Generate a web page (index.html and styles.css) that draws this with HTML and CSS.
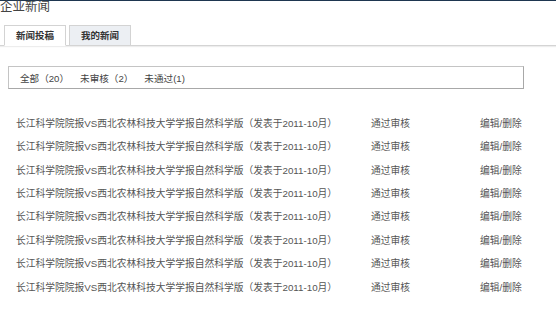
FILE: index.html
```
<!DOCTYPE html>
<html lang="zh-CN">

<head>
  <meta charset="UTF-8">
  <title>企业新闻</title>
  <link rel="stylesheet" href="styles.css">
</head>

<body>
  <div class="topbar"></div>
  <h1 class="page-title">企业新闻</h1>

  <!-- タブ -->
  <div class="tabs">
    <a href="javascript:void(0);" class="tab active">新闻投稿</a>
    <a href="javascript:void(0);" class="tab">我的新闻</a>
  </div>

  <div class="filter">
    <a href="javascript:void(0);">全部（20）</a>
    <a href="javascript:void(0);">未审核（2）</a>
    <a href="javascript:void(0);">未通过(1)</a>
  </div>

  <div class="news-list">
    <div class="news-row">
      <span class="news-title">长江科学院院报VS西北农林科技大学学报自然科学版（发表于2011-10月）</span>
      <span class="news-status">通过审核</span>
      <span class="news-ops">编辑/删除</span>
    </div>
    <div class="news-row">
      <span class="news-title">长江科学院院报VS西北农林科技大学学报自然科学版（发表于2011-10月）</span>
      <span class="news-status">通过审核</span>
      <span class="news-ops">编辑/删除</span>
    </div>
    <div class="news-row">
      <span class="news-title">长江科学院院报VS西北农林科技大学学报自然科学版（发表于2011-10月）</span>
      <span class="news-status">通过审核</span>
      <span class="news-ops">编辑/删除</span>
    </div>
    <div class="news-row">
      <span class="news-title">长江科学院院报VS西北农林科技大学学报自然科学版（发表于2011-10月）</span>
      <span class="news-status">通过审核</span>
      <span class="news-ops">编辑/删除</span>
    </div>
    <div class="news-row">
      <span class="news-title">长江科学院院报VS西北农林科技大学学报自然科学版（发表于2011-10月）</span>
      <span class="news-status">通过审核</span>
      <span class="news-ops">编辑/删除</span>
    </div>
    <div class="news-row">
      <span class="news-title">长江科学院院报VS西北农林科技大学学报自然科学版（发表于2011-10月）</span>
      <span class="news-status">通过审核</span>
      <span class="news-ops">编辑/删除</span>
    </div>
    <div class="news-row">
      <span class="news-title">长江科学院院报VS西北农林科技大学学报自然科学版（发表于2011-10月）</span>
      <span class="news-status">通过审核</span>
      <span class="news-ops">编辑/删除</span>
    </div>
    <div class="news-row">
      <span class="news-title">长江科学院院报VS西北农林科技大学学报自然科学版（发表于2011-10月）</span>
      <span class="news-status">通过审核</span>
      <span class="news-ops">编辑/删除</span>
    </div>
  </div>
</body>

</html>
```

FILE: styles.css
```
body {
  margin: 0;
  background: #fff;
  font-family: "Liberation Sans", "Noto Sans CJK SC", sans-serif;
  color: #555;
}

a {
  color: inherit;
  text-decoration: none;
}

.topbar {
  height: 1px;
  background: #1e3650;
}

.page-title {
  margin: 0;
  font-size: 12.5px;
  line-height: 13px;
  font-weight: normal;
  color: #444;
}

/* タブ */
.tabs {
  display: flex;
  gap: 3px;
  margin-top: 11px;
  padding-left: 4px;
  border-bottom: 1px solid #d4d4d4;
  box-shadow: 0 1px 1px rgba(0, 0, 0, 0.07);
}

.tab {
  width: 60px;
  height: 19px;
  line-height: 19px;
  margin-bottom: -1px;
  text-align: center;
  font-size: 9.5px;
  font-weight: bold;
  color: #333;
  background: #eceff3;
  border: 1px solid #d3d3d3;
  border-bottom: none;
}

.tab.active {
  background: #fff;
  border-bottom: 1px solid #fff;
}

/* 絞り込み */
.filter {
  display: flex;
  gap: 11px;
  width: 503px;
  height: 21px;
  margin: 20px 0 0 8px;
  padding-left: 11px;
  align-items: center;
  font-size: 9.6px;
  color: #444;
  border: 1px solid #c4c4c4;
  border-right-color: #a8a8a8;
  border-bottom-color: #a8a8a8;
}

/* 一覧 */
.news-list {
  margin-top: 22px;
  padding-left: 16px;
}

.news-row {
  display: grid;
  grid-template-columns: 355px 109px 1fr;
  height: 23.43px;
  align-items: center;
  font-size: 9.75px;
  color: #555;
  white-space: nowrap;
}
```
